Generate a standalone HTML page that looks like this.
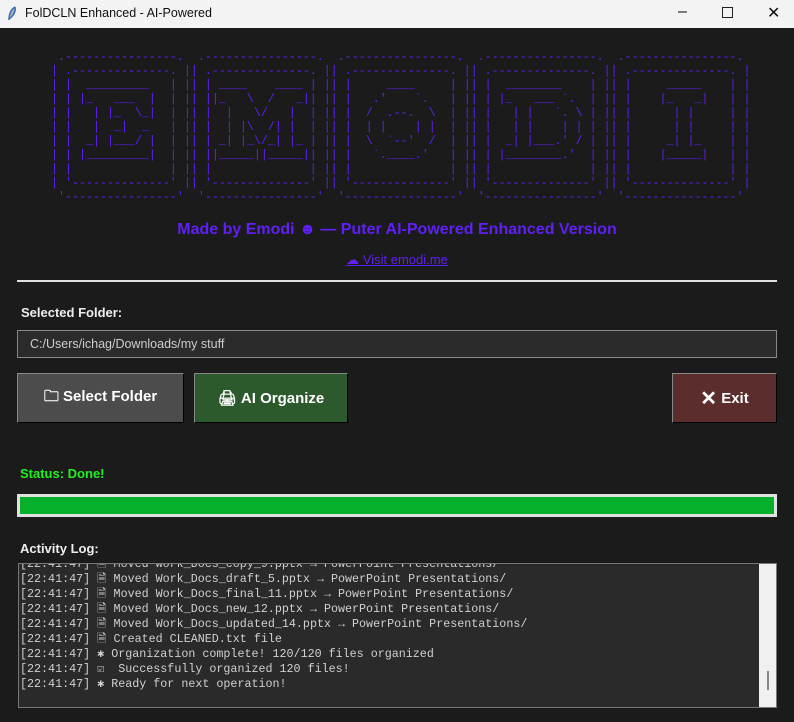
<!DOCTYPE html>
<html><head><meta charset="utf-8"><style>
*{margin:0;padding:0;box-sizing:border-box}
body{width:794px;height:722px;background:#1b1b1b;font-family:"Liberation Sans",sans-serif;position:relative;overflow:hidden}
.tb{position:absolute;left:0;top:0;width:794px;height:28px;background:#f3f3f3;color:#111;font-size:12.5px}
.tb .t{position:absolute;left:25px;top:6px}
.abs{position:absolute}
pre.art{position:absolute;left:51px;top:50px;font-family:"Liberation Mono",monospace;font-size:11.67px;line-height:14px;color:#5f1ff5;white-space:pre}
.btn{position:absolute;color:#fff;font-weight:bold;font-size:15px;display:flex;align-items:center;justify-content:center;border:1px solid #888;border-right-color:#000;border-bottom-color:#000}
.log{position:absolute;left:18px;top:563px;width:759px;height:145px;background:#2a2a2a;border:1px solid #777;overflow:hidden}
.log pre{font-family:"Liberation Mono",monospace;font-size:11.7px;line-height:15px;color:#d0d0d0;padding-left:1px;margin-top:-7px}
</style></head><body>
<div class="tb"><svg class="abs" style="left:6px;top:6px" width="12" height="16"><path d="M9 1 C4 4 3 9 3 14 M9 1 C10 6 7 10 3 13" stroke="#3a6db0" stroke-width="1.5" fill="#9ab"/></svg><span class="t">FolDCLN Enhanced - AI-Powered</span>
<span class="abs" style="left:678px;top:3px;font-size:16px">–</span>
<span class="abs" style="left:722px;top:7px;width:11px;height:11px;border:1px solid #222"></span>
<span class="abs" style="left:767px;top:3px;font-size:16px">✕</span></div>
<pre class="art"> .----------------.  .----------------.  .----------------.  .----------------.  .----------------. 
| .--------------. || .--------------. || .--------------. || .--------------. || .--------------. |
| |  _________   | || | ____    ____ | || |     ____     | || |  ________    | || |     _____    | |
| | |_   ___  |  | || ||_   \  /   _|| || |   .'    `.   | || | |_   ___ `.  | || |    |_   _|   | |
| |   | |_  \_|  | || |  |   \/   |  | || |  /  .--.  \  | || |   | |   `. \ | || |      | |     | |
| |   |  _|  _   | || |  | |\  /| |  | || |  | |    | |  | || |   | |    | | | || |      | |     | |
| |  _| |___/ |  | || | _| |_\/_| |_ | || |  \  `--'  /  | || |  _| |___.' / | || |     _| |_    | |
| | |_________|  | || ||_____||_____|| || |   `.____.'   | || | |________.'  | || |    |_____|   | |
| |              | || |              | || |              | || |              | || |              | |
| '--------------' || '--------------' || '--------------' || '--------------' || '--------------' |
 '----------------'  '----------------'  '----------------'  '----------------'  '----------------' </pre>
<div class="abs" style="left:0;width:794px;top:221px;text-align:center;color:#5f1ff5;font-weight:bold;font-size:16px">Made by Emodi ☻ — Puter AI-Powered Enhanced Version</div>
<div class="abs" style="left:0;width:794px;top:252px;text-align:center;color:#5f1ff5;font-size:13px;text-decoration:underline">☁ Visit emodi.me</div>
<div class="abs" style="left:17px;top:280px;width:760px;height:2px;background:#e0e0e0"></div>
<div class="abs" style="left:21px;top:305px;color:#eee;font-weight:bold;font-size:13px">Selected Folder:</div>
<div class="abs" style="left:17px;top:330px;width:760px;height:28px;background:#2b2b2b;border:1px solid #888;color:#ccc;font-size:12.5px;padding:6px 0 0 12px">C:/Users/ichag/Downloads/my stuff</div>
<div class="btn" style="left:17px;top:373px;width:167px;height:50px;background:#4c4c4c">🗀&nbsp;Select Folder</div>
<div class="btn" style="left:194px;top:373px;width:154px;height:50px;background:#2d5a2d">🖨&nbsp;AI Organize</div>
<div class="btn" style="left:672px;top:373px;width:105px;height:50px;background:#5c2d2d"><span style="font-size:20px">✕</span>&nbsp;Exit</div>
<div class="abs" style="left:20px;top:466px;color:#22ee22;font-weight:bold;font-size:13px">Status: Done!</div>
<div class="abs" style="left:17px;top:494px;width:760px;height:23px;background:#e0e0e0;padding:3px"><div style="width:100%;height:100%;background:#06b02a"></div></div>
<div class="abs" style="left:20px;top:541px;color:#eee;font-weight:bold;font-size:13px">Activity Log:</div>
<div class="log"><pre>[22:41:47] 🗎 Moved Work_Docs_copy_9.pptx → PowerPoint Presentations/
[22:41:47] 🗎 Moved Work_Docs_draft_5.pptx → PowerPoint Presentations/
[22:41:47] 🗎 Moved Work_Docs_final_11.pptx → PowerPoint Presentations/
[22:41:47] 🗎 Moved Work_Docs_new_12.pptx → PowerPoint Presentations/
[22:41:47] 🗎 Moved Work_Docs_updated_14.pptx → PowerPoint Presentations/
[22:41:47] 🗎 Created CLEANED.txt file
[22:41:47] ✱ Organization complete! 120/120 files organized
[22:41:47] ☑  Successfully organized 120 files!
[22:41:47] ✱ Ready for next operation!</pre>
<div class="abs" style="right:0;top:0;width:17px;height:145px;background:#f0f0f0"><div class="abs" style="left:8px;top:107px;width:2px;height:19px;background:#888"></div></div></div>
</body></html>
